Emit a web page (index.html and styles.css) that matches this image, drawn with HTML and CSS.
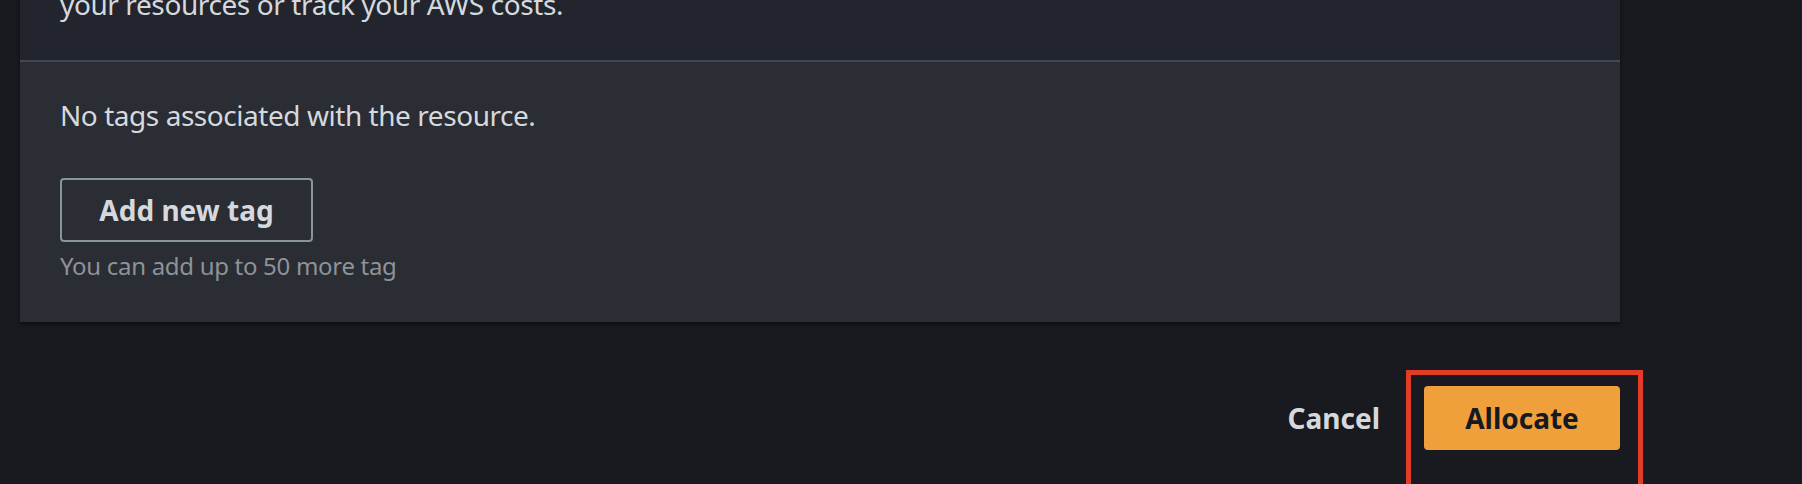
FILE: index.html
```html
<!DOCTYPE html>
<html lang="en">
<head>
<meta charset="utf-8">
<title>Allocate Elastic IP address</title>
<link rel="stylesheet" href="styles.css">
</head>
<body>
<main class="page">
  <section class="card">
    <div class="card-top">
      <p class="desc">your resources or track your AWS costs.</p>
    </div>
    <div class="card-body">
      <p class="empty">No tags associated with the resource.</p>
      <button class="btn btn-normal" type="button">Add new tag</button>
      <p class="hint">You can add up to 50 more tag</p>
    </div>
  </section>
  <div class="actions">
    <button class="btn btn-link" type="button">Cancel</button>
    <div class="highlight-wrap">
      <button class="btn btn-primary" type="button">Allocate</button>
      <span class="highlight"></span>
    </div>
  </div>
</main>
</body>
</html>
```

FILE: styles.css
```css
* { box-sizing: border-box; }

html, body {
  margin: 0;
  padding: 0;
  height: 100%;
  background: #191a1f;
  overflow: hidden;
}

body {
  font-family: "Noto Sans", "Open Sans", sans-serif;
  color: #d5d9dd;
}

.page {
  padding: 0 182px 0 20px;
}

.card {
  width: 1600px;
  background: #2a2d33;
  box-shadow: 0 2px 4px rgba(0, 0, 0, 0.55);
}

.card-top {
  background: #22252e;
  border-bottom: 2px solid #414750;
  padding: 0 40px 38px;
}

.desc {
  margin: -14px 0 0;
  font-size: 28px;
  line-height: 36px;
  letter-spacing: -0.4px;
  color: #d5d9dd;
}

.card-body {
  padding: 33px 40px 40px;
  display: flex;
  flex-direction: column;
  align-items: flex-start;
}

.empty {
  margin: 0;
  font-size: 28px;
  line-height: 40px;
  letter-spacing: -0.45px;
}

.btn {
  font-family: inherit;
  font-size: 28px;
  font-weight: 700;
  height: 64px;
  padding: 0 40px;
  border-radius: 4px;
  border: 2px solid transparent;
  line-height: 60px;
  cursor: pointer;
  white-space: nowrap;
}

.btn-normal {
  margin-top: 43px;
  width: 253px;
  padding: 0;
  background: transparent;
  border-color: #879596;
  color: #d5d9dd;
}

.hint {
  margin: 8px 0 0;
  font-size: 24px;
  line-height: 32px;
  letter-spacing: -0.3px;
  color: #8d9399;
}

.actions {
  width: 1600px;
  padding-top: 64px;
  display: flex;
  justify-content: flex-end;
  align-items: center;
  gap: 22px;
}

.btn-link {
  background: transparent;
  color: #d5d9dd;
  padding: 0 20px;
}

.highlight-wrap {
  position: relative;
}

.btn-primary {
  width: 196px;
  padding: 0;
  background: #f0a03b;
  border-color: #f0a03b;
  color: #16191f;
}

.highlight {
  position: absolute;
  left: -18px;
  top: -16px;
  width: 237px;
  height: 114px;
  border: 5px solid #e23c26;
  border-bottom: 0;
  pointer-events: none;
}
```
